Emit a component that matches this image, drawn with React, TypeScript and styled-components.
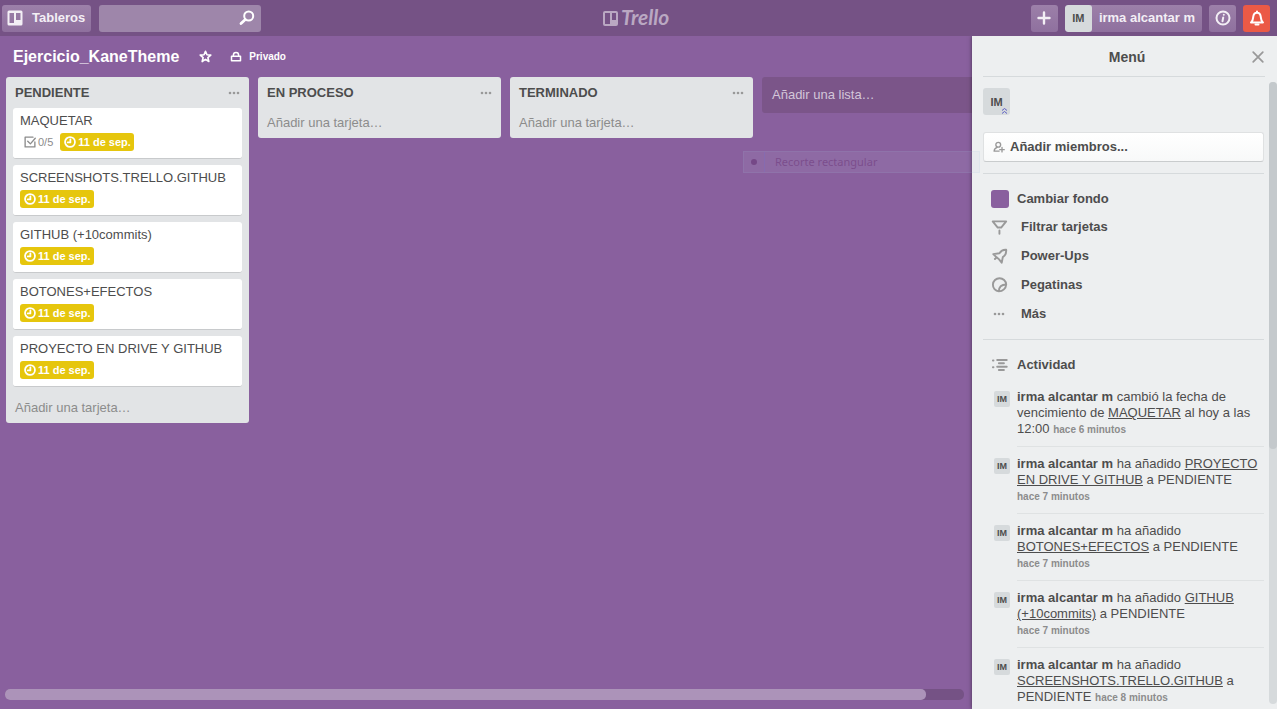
import React from "react";
import styled, { createGlobalStyle } from "styled-components";

const GlobalStyle = createGlobalStyle`
  * { box-sizing: border-box; }
  body {
    margin: 0;
    background: #89609e;
    color: #4d4d4d;
    font: 13px/16px "Liberation Sans", Arial, sans-serif;
  }
  button, input { font: inherit; color: inherit; }
  button { border: 0; padding: 0; background: none; cursor: pointer; text-align: left; }
  svg { display: block; flex: none; }
  h1, h2, h3, p, ul { margin: 0; padding: 0; }
  ul { list-style: none; }
`;

const Page = styled.div`
  display: flex;
  flex-direction: column;
  height: 100vh;
  overflow: hidden;
`;

const TopBar = styled.header`
  display: grid;
  grid-template-columns: 1fr auto 1fr;
  align-items: center;
  flex: none;
  height: 36px;
  padding: 0 7px 0 2px;
  background: #755285;
`;

const BarGroup = styled.div<{ $end?: boolean }>`
  display: flex;
  gap: ${(p) => (p.$end ? 7 : 8)}px;
  justify-content: ${(p) => (p.$end ? "flex-end" : "flex-start")};
`;

const BarButton = styled.button<{ $alert?: boolean; $wide?: boolean }>`
  display: flex;
  align-items: center;
  justify-content: center;
  gap: 9px;
  height: 27px;
  min-width: 27px;
  padding: ${(p) => (p.$wide ? "0 6px 0 5px" : "0")};
  border-radius: 3px;
  background: ${(p) => (p.$alert ? "#eb5a46" : "linear-gradient(#9c80a9, #8f709e)")};
  color: ${(p) => (p.$alert ? "#fff" : "#f3eff5")};
  font-weight: bold;
`;

const UserButton = styled(BarButton)`
  overflow: hidden;
  padding: 0 7px 0 0;
  gap: 7px;
`;

const SearchBox = styled.label`
  display: flex;
  align-items: center;
  width: 162px;
  height: 27px;
  padding-right: 6px;
  border-radius: 3px;
  background: #9e86aa;
  color: #fff;
  input {
    flex: 1;
    min-width: 0;
    height: 100%;
    padding: 0 6px;
    border: 0;
    outline: 0;
    background: transparent;
  }
`;

const Logo = styled.a`
  display: block;
  color: #baa8c2;
`;

const Avatar = styled.span<{ $size: number }>`
  display: flex;
  flex: none;
  align-items: center;
  justify-content: center;
  position: relative;
  width: ${(p) => p.$size}px;
  height: ${(p) => p.$size}px;
  border-radius: ${(p) => (p.$size > 20 ? 3 : 2)}px;
  background: #d6dadc;
  color: #4d4d4d;
  font-size: ${(p) => (p.$size > 20 ? 11 : 9)}px;
  font-weight: bold;
`;

const AdminMark = styled.svg`
  position: absolute;
  right: 2px;
  bottom: 1px;
`;

const Main = styled.div`
  display: flex;
  flex: 1;
  min-height: 0;
  position: relative;
`;

const Board = styled.main`
  display: flex;
  flex: 1;
  flex-direction: column;
  min-width: 0;
  overflow: hidden;
`;

const BoardHeader = styled.div`
  display: flex;
  flex: none;
  align-items: center;
  height: 41px;
  padding-left: 13px;
  color: #fff;
`;

const BoardTitle = styled.h1`
  font-size: 16px;
  line-height: 20px;
  margin-right: 20px;
`;

const HeaderAction = styled.button`
  display: flex;
  align-items: center;
  gap: 7px;
  margin-right: 18px;
  font-size: 10px;
  font-weight: bold;
`;

const Lists = styled.div`
  display: flex;
  flex: 1;
  align-items: flex-start;
  gap: 9px;
  min-height: 0;
  padding-left: 6px;
`;

const List = styled.section`
  flex: none;
  width: 243px;
  border-radius: 3px;
  background: #e2e4e6;
`;

const ListHeader = styled.div`
  display: flex;
  align-items: center;
  justify-content: space-between;
  height: 31px;
  padding: 0 9px;
  h2 { font-size: 13px; line-height: 16px; }
  button { color: #999; }
`;

const Cards = styled.ul`
  display: flex;
  flex-direction: column;
  gap: 6px;
  padding: 0 7px 6px;
`;

const Card = styled.li`
  height: 51px;
  padding: 5px 7px 0;
  border-bottom: 1px solid #c8cacc;
  border-radius: 3px;
  background: #fff;
`;

const Badges = styled.div`
  display: flex;
  gap: 4px;
  margin-top: 4px;
`;

const Badge = styled.span<{ $due?: boolean }>`
  display: flex;
  align-items: center;
  gap: 2px;
  height: 18px;
  padding: 0 3px 0 4px;
  border-radius: 3px;
  background: ${(p) => (p.$due ? "#e6c60d" : "transparent")};
  color: ${(p) => (p.$due ? "#fff" : "#8c8c8c")};
  font-size: 11px;
  font-weight: ${(p) => (p.$due ? "bold" : "normal")};
`;

const AddCard = styled.button`
  display: block;
  width: 100%;
  height: 30px;
  padding-left: 9px;
  color: #8c8c8c;
`;

const AddList = styled.button`
  flex: none;
  width: 243px;
  height: 36px;
  padding-left: 10px;
  border-radius: 3px;
  background: #7b5589;
  color: #d3c6d9;
`;

const BoardScroll = styled.div`
  flex: none;
  height: 11px;
  margin: 0 8px 9px 5px;
  border-radius: 5px;
  background: #755285;
  div {
    width: 96%;
    height: 100%;
    border-radius: 5px;
    background: #ac93b9;
  }
`;

const Menu = styled.aside`
  display: flex;
  flex: none;
  flex-direction: column;
  width: 305px;
  padding-left: 11px;
  background: #edeff0;
  box-shadow: 0 0 4px rgba(0, 0, 0, 0.5);
  clip-path: inset(0 0 0 -6px);
`;

const MenuHeader = styled.div`
  display: grid;
  grid-template-columns: 20px 1fr 14px;
  align-items: center;
  flex: none;
  height: 41px;
  margin-right: 12px;
  padding-top: 2px;
  border-bottom: 1px solid #d6dadc;
  h2 { font-size: 14px; line-height: 18px; text-align: center; }
  button { color: #999; }
`;

const MenuBody = styled.div`
  display: flex;
  flex: 1;
  min-height: 0;
  gap: 5px;
`;

const MenuContent = styled.div`
  flex: 1;
  min-width: 0;
  overflow: hidden;
`;

const MenuScroll = styled.div`
  flex: none;
  width: 8px;
  margin: 5px 0;
  border-radius: 4px;
  background: #d6dadc;
  div {
    height: 59%;
    border-radius: 4px;
    background: #c4c9cc;
  }
`;

const Members = styled.div`
  padding: 11px 0;
  border-bottom: 1px solid #d6dadc;
`;

const AddMembers = styled.button`
  display: flex;
  align-items: center;
  gap: 5px;
  width: 100%;
  height: 30px;
  margin-top: 17px;
  padding: 0 9px 1px;
  border: 1px solid #dfe1e2;
  border-bottom-color: #c9cccd;
  border-radius: 3px;
  background: linear-gradient(#fff, #f8f9f9);
  font-weight: bold;
  svg { color: #999; }
`;

const MenuNav = styled.nav`
  display: flex;
  flex-direction: column;
  padding: 12px 0 11px;
  border-bottom: 1px solid #d6dadc;
`;

const MenuItem = styled.button<{ $wide?: boolean }>`
  display: flex;
  align-items: center;
  gap: ${(p) => (p.$wide ? 12 : 8)}px;
  height: ${(p) => (p.$wide ? 29 : 26)}px;
  padding-left: 8px;
  font-weight: bold;
  svg { color: #999; }
`;

const Swatch = styled.span`
  width: 18px;
  height: 18px;
  border-radius: 3px;
  background: #89609e;
`;

const ActivityTitle = styled.h3`
  display: flex;
  align-items: center;
  gap: 8px;
  height: 40px;
  padding: 9px 0 0 8px;
  font-size: 13px;
  line-height: 16px;
  svg { color: #999; }
`;

const Activity = styled.li`
  display: flex;
  gap: 7px;
  padding-left: 11px;
  p {
    flex: 1;
    min-width: 0;
    padding: 9px 5px 9px 0;
    border-bottom: 1px solid #dfe2e3;
  }
  a { color: #4d4d4d; }
  > span { margin-top: 11px; }
`;

const Time = styled.small`
  color: #8c8c8c;
  font-size: 10px;
  line-height: 10px;
  font-weight: bold;
  white-space: nowrap;
`;

const Ghost = styled.div`
  display: flex;
  position: absolute;
  top: 115px;
  right: 297px;
  width: 237px;
  height: 22px;
  border: 1px solid rgba(160, 200, 230, 0.1);
  background: rgba(190, 200, 230, 0.1);
  color: rgba(100, 40, 110, 0.45);
  font: 11px/20px "Noto Sans", sans-serif;
  pointer-events: none;
  i {
    display: flex;
    align-items: center;
    justify-content: center;
    width: 21px;
    margin-right: 10px;
    border-right: 1px solid rgba(120, 110, 200, 0.35);
  }
  i::before {
    content: "";
    width: 6px;
    height: 6px;
    border-radius: 3px;
    background: rgba(90, 35, 105, 0.48);
  }
`;

type IconProps = { size?: number; weight?: number; children: React.ReactNode };
const Icon = ({ size = 16, weight = 2, children }: IconProps) => (
  <svg width={size} height={size} viewBox="0 0 16 16" fill="none" stroke="currentColor"
    strokeWidth={weight} strokeLinecap="round" strokeLinejoin="round" aria-hidden="true">
    {children}
  </svg>
);

const BoardIcon = () => (
  <Icon>
    <path fill="currentColor" stroke="none" fillRule="evenodd"
      d="M2 .5h12A1.500 1.500 0 0 1 15.500 2v12a1.500 1.500 0 0 1-1.500 1.500H2A1.500 1.500 0 0 1 .5 14V2A1.500 1.500 0 0 1 2 .5ZM2.500 3v10h4.500V3ZM9 3v7h4.500V3Z" />
  </Icon>
);

const Dots = ({ wide }: { wide?: boolean }) => (
  <svg width={wide ? 18 : 12} height="12" viewBox={wide ? "-2 0 18 12" : "0 0 12 12"} fill="currentColor" aria-hidden="true">
    <circle cx="2" cy="6" r="1.300" /><circle cx="6" cy="6" r="1.300" /><circle cx="10" cy="6" r="1.300" />
  </svg>
);

const Clock = () => (
  <Icon size={12} weight={2.400}>
    <circle cx="8" cy="8" r="6.600" /><path d="M8.500 4.500v4H5" />
  </Icon>
);

const Due = () => <Badge $due><Clock />11 de sep.</Badge>;

const cards = [
  { title: "MAQUETAR", checklist: "0/5" },
  { title: "SCREENSHOTS.TRELLO.GITHUB" },
  { title: "GITHUB (+10commits)" },
  { title: "BOTONES+EFECTOS" },
  { title: "PROYECTO EN DRIVE Y GITHUB" },
];

const lists = [
  { name: "PENDIENTE", cards },
  { name: "EN PROCESO", cards: [] },
  { name: "TERMINADO", cards: [] },
];

const activities = [
  { before: "cambió la fecha de vencimiento de", card: "MAQUETAR", after: "al hoy a las 12:00", time: "hace 6 minutos" },
  { before: "ha añadido", card: "PROYECTO EN DRIVE Y GITHUB", after: "a PENDIENTE", time: "hace 7 minutos" },
  { before: "ha añadido", card: "BOTONES+EFECTOS", after: "a PENDIENTE", time: "hace 7 minutos" },
  { before: "ha añadido", card: "GITHUB (+10commits)", after: "a PENDIENTE", time: "hace 7 minutos" },
  { before: "ha añadido", card: "SCREENSHOTS.TRELLO.GITHUB", after: "a PENDIENTE", time: "hace 8 minutos" },
];

export default function App() {
  return (
    <Page>
      <GlobalStyle />
      <TopBar>
        <BarGroup>
          <BarButton $wide><BoardIcon />Tableros</BarButton>
          <SearchBox>
            <input type="text" aria-label="Buscar" />
            <Icon><circle cx="9.700" cy="6" r="4.500" /><path d="M6.300 9.500 2 13.500" strokeWidth="2.800" /></Icon>
          </SearchBox>
        </BarGroup>
        <Logo href="#" aria-label="Trello">
          <svg width="72" height="26" viewBox="0 0 72 26" fill="currentColor">
            <path fillRule="evenodd" d="M5 6h11a2 2 0 0 1 2 2v11a2 2 0 0 1-2 2H5a2 2 0 0 1-2-2V8a2 2 0 0 1 2-2ZM5 8v11h5V8ZM12 8v7h4V8Z" />
            <text x="21" y="20" fontFamily="Lato" fontSize="21" fontWeight="700" fontStyle="italic">Trello</text>
          </svg>
        </Logo>
        <BarGroup $end>
          <BarButton aria-label="Crear"><Icon weight={2.400}><path d="M8 2.500v11M2.500 8h11" /></Icon></BarButton>
          <UserButton><Avatar $size={27}>IM</Avatar>irma alcantar m</UserButton>
          <BarButton aria-label="Información">
            <Icon><circle cx="8" cy="8" r="6.500" /><path d="M8.200 7.500 7.500 11.300M8.800 4.700v.1" /></Icon>
          </BarButton>
          <BarButton $alert aria-label="Notificaciones">
            <Icon><path d="M2 12.500c2-1.500 2-3 2.200-5.500C4.500 4 6 2.700 8 2.700S11.500 4 11.800 7c.2 2.500.2 4 2.200 5.500ZM8 1.500v1" /><path d="M6.500 14.500h3" /></Icon>
          </BarButton>
        </BarGroup>
      </TopBar>
      <Main>
        <Board>
          <BoardHeader>
            <BoardTitle>Ejercicio_KaneTheme</BoardTitle>
            <HeaderAction aria-label="Favorito">
              <Icon size={13}><path d="m8 1.500 1.800 4.400 4.700.4-3.600 3 1.200 4.900L8 11.600l-4.100 2.600 1.200-4.900-3.600-3 4.700-.4Z" /></Icon>
            </HeaderAction>
            <HeaderAction>
              <Icon size={12}><path d="M2 7h12v6H2ZM4.500 7V5.500a3.500 3.500 0 0 1 7 0V7" /></Icon>
              Privado
            </HeaderAction>
          </BoardHeader>
          <Lists>
            {lists.map((list) => (
              <List key={list.name}>
                <ListHeader>
                  <h2>{list.name}</h2>
                  <button aria-label="Acciones de lista"><Dots /></button>
                </ListHeader>
                {list.cards.length > 0 && (
                  <Cards>
                    {list.cards.map((card) => (
                      <Card key={card.title}>
                        <p>{card.title}</p>
                        <Badges>
                          {card.checklist && (
                            <Badge>
                              <Icon size={12} weight={1.800}><path d="M12 1.500H1.500v13h13V8M5 7l3.500 3.500L15 3" /></Icon>
                              {card.checklist}
                            </Badge>
                          )}
                          <Due />
                        </Badges>
                      </Card>
                    ))}
                  </Cards>
                )}
                <AddCard>Añadir una tarjeta…</AddCard>
              </List>
            ))}
            <AddList>Añadir una lista…</AddList>
          </Lists>
          <BoardScroll><div /></BoardScroll>
        </Board>
        <Menu>
          <MenuHeader>
            <span />
            <h2>Menú</h2>
            <button aria-label="Cerrar"><Icon size={14}><path d="m2.500 2.500 11 11M13.500 2.500l-11 11" /></Icon></button>
          </MenuHeader>
          <MenuBody>
            <MenuContent>
              <Members>
                <Avatar $size={27}>
                  IM
                  <AdminMark width="7" height="7" viewBox="0 0 7 7" fill="none" stroke="#5d5fc4"><path d="m1 3.500 2.500-2 2.500 2M1 6.500l2.500-2 2.500 2" /></AdminMark>
                </Avatar>
                <AddMembers>
                  <Icon size={12} weight={1.800}><circle cx="7" cy="5" r="3.200" /><path d="M5.500 8.500C3 9.500 1.500 10.500 1.500 13.500H8M12 8.500v6M9 11.500h6" /></Icon>
                  Añadir miembros...
                </AddMembers>
              </Members>
              <MenuNav>
                <MenuItem><Swatch />Cambiar fondo</MenuItem>
                <MenuItem $wide><Icon size={18} weight={1.700}><path d="M1.500 3h12L9 8.500H6ZM7.500 11v3" /></Icon>Filtrar tarjetas</MenuItem>
                <MenuItem $wide><Icon size={18} weight={1.700}><path d="M13.500 2.500C10.500 2.200 9 3.200 7.500 5.500L2 6.300l3 2.900L7.200 11l2.300 3L10.500 9c2.300-1.500 3.300-3.500 3-6.500ZM5 9.200 3.500 10.700" /></Icon>Power-Ups</MenuItem>
                <MenuItem $wide><Icon size={18} weight={1.700}><path d="M7 13.700A5.900 5.900 0 1 1 13.500 7.500M7 13.700c-.2-4 2.300-6.200 6.500-6.200-.2 3.500-3 6.200-6.500 6.200Z" /></Icon>Pegatinas</MenuItem>
                <MenuItem $wide><Dots wide />Más</MenuItem>
              </MenuNav>
              <ActivityTitle>
                <Icon size={18} weight={1.700}><path d="M5.500 3.500H14M7 6.500h4.500M5.500 9.500H14M7 12.500h4.500M1.700 4h.5M1.700 10h.5" /></Icon>
                Actividad
              </ActivityTitle>
              <ul>
                {activities.map((item) => (
                  <Activity key={item.card}>
                    <Avatar $size={16}>IM</Avatar>
                    <p>
                      <b>irma alcantar m</b> {item.before} <a href="#">{item.card}</a> {item.after} <Time>{item.time}</Time>
                    </p>
                  </Activity>
                ))}
              </ul>
            </MenuContent>
            <MenuScroll><div /></MenuScroll>
          </MenuBody>
        </Menu>
        <Ghost><i />Recorte rectangular</Ghost>
      </Main>
    </Page>
  );
}
